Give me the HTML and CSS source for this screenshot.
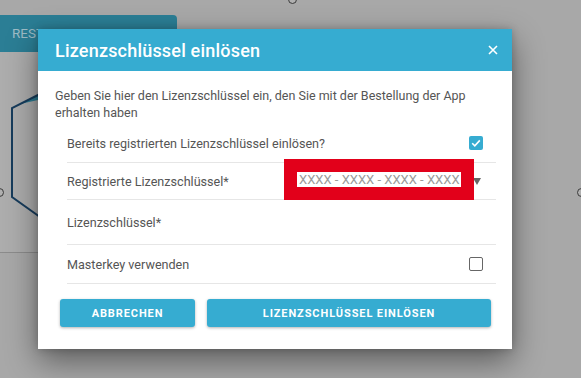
FILE: index.html
```html
<!DOCTYPE html>
<html lang="de">
<head>
<meta charset="utf-8">
<link rel="stylesheet" href="styles.css">
</head>
<body>
<div class="page">
  <div class="card">
    <div class="card-tab"><span class="tab-label">RESTAURANT</span></div>
    <div class="card-body">
      <svg class="shape" width="60" height="180" viewBox="0 0 60 180">
        <polygon points="20,52 38,43 38,48" fill="#2c7c93"/>
        <polyline points="40,42 12,56 12,145 40,165" fill="none" stroke="#173c5c" stroke-width="2"/>
      </svg>
    </div>
  </div>
  <span class="handle handle-top"></span>
  <span class="handle handle-left"></span>
  <span class="handle handle-right"></span>
</div>

<div class="dialog">
  <div class="dialog-header">
    <h1 class="dialog-title">Lizenzschlüssel einlösen</h1>
    <svg class="dialog-close" width="10" height="10" viewBox="0 0 10 10"><path d="M1 1L9 9M9 1L1 9" stroke="#fff" stroke-width="1.6" fill="none"/></svg>
  </div>
  <div class="dialog-body">
    <p class="intro">Geben Sie hier den Lizenzschlüssel ein, den Sie mit der Bestellung der App erhalten haben</p>
    <div class="rows">
      <div class="row">
        <span class="label">Bereits registrierten Lizenzschlüssel einlösen?</span>
        <span class="checkbox checked">
          <svg width="14" height="14" viewBox="0 0 14 14"><polyline points="3.2,7.2 5.8,9.8 10.8,4.4" fill="none" stroke="#fff" stroke-width="1.6"/></svg>
        </span>
      </div>
      <div class="row row-select">
        <span class="label">Registrierte Lizenzschlüssel*</span>
        <span class="caret"></span>
        <div class="redact"><span class="key-field">XXXX - XXXX - XXXX - XXXX</span></div>
      </div>
      <div class="row row-tall">
        <span class="label">Lizenzschlüssel*</span>
      </div>
      <div class="row">
        <span class="label">Masterkey verwenden</span>
        <span class="checkbox"></span>
      </div>
    </div>
    <div class="actions">
      <button class="btn btn-cancel">ABBRECHEN</button>
      <button class="btn btn-primary">LIZENZSCHLÜSSEL EINLÖSEN</button>
    </div>
  </div>
</div>
</body>
</html>
```

FILE: styles.css
```css
html, body {
  margin: 0;
  padding: 0;
}
body {
  width: 581px;
  height: 378px;
  overflow: hidden;
  background: #a8a8a8;
  font-family: Roboto, "Liberation Sans", sans-serif;
  position: relative;
}
.page {
  position: relative;
  width: 581px;
  height: 378px;
  padding-top: 15px;
  box-sizing: border-box;
}
.card {
  width: 320px;
}
.card-tab {
  width: 177px;
  height: 37px;
  background: #2b7e95;
  border-radius: 0 4px 0 0;
  display: flex;
  align-items: flex-start;
  padding: 11px 0 0 12px;
  box-sizing: border-box;
  overflow: hidden;
}
.tab-label {
  color: #9dbcc6;
  font-size: 13.5px;
  line-height: 15px;
}
.card-body {
  height: 200px;
  background: #adadad;
  border-bottom: 1px solid #8c8c8c;
  position: relative;
}
.shape {
  position: absolute;
  left: 0;
  top: 0;
}
.handle {
  position: absolute;
  width: 7px;
  height: 7px;
  border: 1.5px solid #3a3a3a;
  border-radius: 50%;
  background: #b0b0b0;
}
.handle-top { left: 288px; top: -5px; }
.handle-left { left: -5px; top: 188px; }
.handle-right { left: 577px; top: 188px; }

.dialog {
  position: absolute;
  left: 38px;
  top: 29px;
  width: 474px;
  background: #fff;
  box-shadow: 0 12px 30px rgba(0,0,0,0.45), 0 0 8px rgba(0,0,0,0.2);
}
.dialog-header {
  height: 42px;
  background: #36acd1;
  display: flex;
  align-items: center;
  justify-content: space-between;
  padding: 0 14px 0 17px;
}
.dialog-title {
  margin: 0;
  font-size: 18px;
  font-weight: 500;
  letter-spacing: 0.2px;
  color: #fff;
}
.dialog-close {
  display: block;
}
.dialog-body {
  padding: 16px 16px 22px 17px;
}
.intro {
  margin: 0;
  font-size: 12.5px;
  line-height: 17px;
  color: #555;
}
.rows {
  margin: 3px 0 0 12px;
}
.row {
  height: 38px;
  border-bottom: 1px solid #e6e6e6;
  display: flex;
  align-items: center;
  justify-content: space-between;
  position: relative;
}
.row-select { height: 36px; }
.row-tall { height: 44px; }
.label {
  font-size: 12.6px;
  color: #555;
}
.checkbox {
  width: 14px;
  height: 14px;
  box-sizing: border-box;
  border: 1.5px solid #666;
  border-radius: 2px;
  margin-right: 13px;
  display: flex;
}
.checkbox.checked {
  background: #36acd1;
  border: none;
}
.caret {
  width: 0;
  height: 0;
  border-left: 4px solid transparent;
  border-right: 4px solid transparent;
  border-top: 7px solid #666;
  margin-right: 15px;
}
.redact {
  position: absolute;
  left: 217px;
  top: -4px;
  width: 190px;
  height: 41px;
  background: #e2001a;
  display: flex;
  align-items: center;
  justify-content: center;
}
.key-field {
  background: #fff;
  width: 164px;
  height: 15px;
  font-size: 13px;
  line-height: 15px;
  color: #9a9a9a;
  padding-left: 2px;
  box-sizing: border-box;
  white-space: nowrap;
  overflow: hidden;
  font-family: Roboto, "Liberation Sans", sans-serif;
}
.actions {
  display: flex;
  gap: 12px;
  margin: 15px 5px 0 5px;
}
.btn {
  height: 28px;
  border: none;
  border-radius: 3px;
  background: #36acd1;
  color: #fff;
  font-family: Roboto, "Liberation Sans", sans-serif;
  font-size: 11px;
  font-weight: 700;
  letter-spacing: 0.9px;
  box-shadow: 0 1px 3px rgba(0,0,0,0.3);
  padding: 0;
}
.btn-cancel { width: 135px; }
.btn-primary { flex: 1; }
```
